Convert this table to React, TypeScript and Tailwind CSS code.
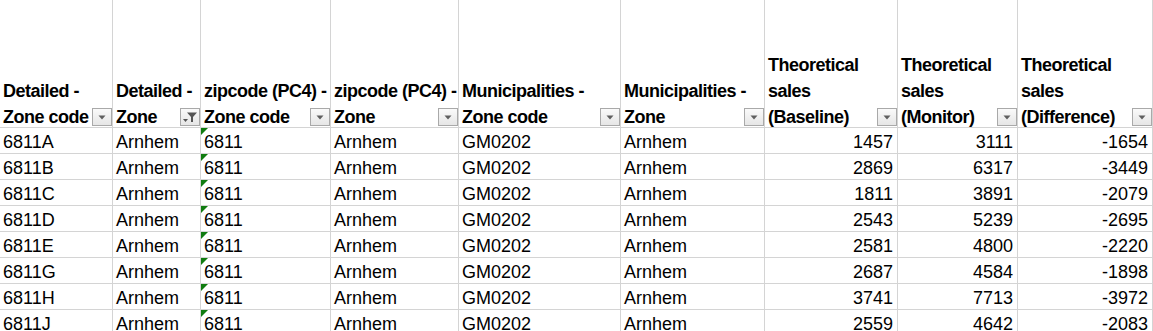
const headers: { lines: string[]; filtered?: boolean }[] = [
  { lines: ["Detailed -", "Zone code"] },
  { lines: ["Detailed -", "Zone"], filtered: true },
  { lines: ["zipcode (PC4) -", "Zone code"] },
  { lines: ["zipcode (PC4) -", "Zone"] },
  { lines: ["Municipalities -", "Zone code"] },
  { lines: ["Municipalities -", "Zone"] },
  { lines: ["Theoretical", "sales", "(Baseline)"] },
  { lines: ["Theoretical", "sales", "(Monitor)"] },
  { lines: ["Theoretical", "sales", "(Difference)"] },
];

const rows: [string, number, number, number][] = [
  ["6811A", 1457, 3111, -1654],
  ["6811B", 2869, 6317, -3449],
  ["6811C", 1811, 3891, -2079],
  ["6811D", 2543, 5239, -2695],
  ["6811E", 2581, 4800, -2220],
  ["6811G", 2687, 4584, -1898],
  ["6811H", 3741, 7713, -3972],
  ["6811J", 2559, 4642, -2083],
];

const FilterButton = ({ filtered }: { filtered?: boolean }) => (
  <span className="absolute right-0 bottom-[1px] w-[20px] h-[18px] flex items-center justify-center border border-[#a9a9a9] bg-gradient-to-b from-[#fafafa] to-[#e6e6e6]">
    {filtered ? (
      <svg width="16" height="14" viewBox="0 0 16 14">
        <path d="M5 2.5h10L11 7v5H9V7z" fill="#555" />
        <path d="M1 9h5L3.5 12z" fill="#555" />
      </svg>
    ) : (
      <svg width="8" height="5" viewBox="0 0 8 5">
        <path d="M0.5 0.5h7L4 4.5z" fill="#5f5f5f" />
      </svg>
    )}
  </span>
);

const Cell = ({ children, right, flag }: { children: React.ReactNode; right?: boolean; flag?: boolean }) => (
  <div
    className={`relative h-[26px] pt-[3px] leading-[22px] border-r border-b border-[#d4d4d4] whitespace-nowrap overflow-hidden ${
      right ? "text-right pr-[4px]" : "pl-[3px]"
    }`}
  >
    {flag && (
      <span className="absolute left-0 top-0 w-0 h-0 border-t-[7px] border-r-[7px] border-t-[#107c10] border-r-transparent" />
    )}
    {children}
  </div>
);

export default function App() {
  return (
    <div className="w-[1153px] h-[331px] overflow-hidden bg-white text-black font-['Liberation_Sans',Arial,sans-serif] text-[18px]">
      <div className="grid grid-cols-[113px_88px_130px_128px_162px_144px_133px_120px_1fr]">
        {headers.map((h, i) => (
          <div
            key={i}
            className="relative h-[128px] flex flex-col justify-end pl-[3px] border-r border-b border-[#d4d4d4] font-bold tracking-[-0.5px] leading-[26px] whitespace-nowrap"
          >
            <div className="translate-y-[3px]">
              {h.lines.map((l) => (
                <div key={l}>{l}</div>
              ))}
            </div>
            <FilterButton filtered={h.filtered} />
          </div>
        ))}
        {rows.map((r) => (
          <>
            <Cell key={r[0] + "a"}>{r[0]}</Cell>
            <Cell key={r[0] + "b"}>Arnhem</Cell>
            <Cell key={r[0] + "c"} flag>
              6811
            </Cell>
            <Cell key={r[0] + "d"}>Arnhem</Cell>
            <Cell key={r[0] + "e"}>GM0202</Cell>
            <Cell key={r[0] + "f"}>Arnhem</Cell>
            <Cell key={r[0] + "g"} right>
              {r[1]}
            </Cell>
            <Cell key={r[0] + "h"} right>
              {r[2]}
            </Cell>
            <Cell key={r[0] + "i"} right>
              {r[3]}
            </Cell>
          </>
        ))}
      </div>
    </div>
  );
}
